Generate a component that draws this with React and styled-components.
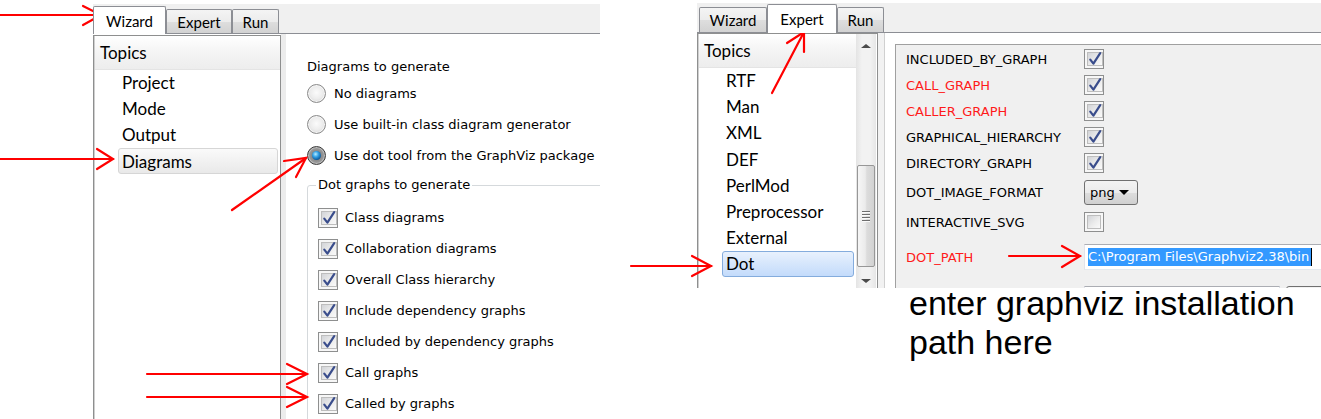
import React from 'react';
import styled, { createGlobalStyle, css } from 'styled-components';

const Global = createGlobalStyle`
  html, body { margin: 0; padding: 0; background: #fff; }
  body { width: 1321px; height: 419px; overflow: hidden; }
`;

const Page = styled.div`
  position: relative;
  display: flex;
  align-items: flex-start;
  width: 1321px;
  height: 419px;
  overflow: hidden;
  background: #fff;
`;

const Window = styled.div`
  display: flex;
  flex-direction: column;
  flex: none;
  overflow: hidden;
  width: ${p => p.$w}px;
  height: ${p => p.$h}px;
  margin: ${p => p.$top}px 0 0 ${p => p.$left}px;
`;

const Column = styled.div`
  display: flex;
  flex-direction: column;
  flex: none;
  width: 624px;
  margin: 3px 0 0 97px;
`;

const TabBar = styled.div`
  display: flex;
  align-items: flex-end;
  flex: none;
  height: 29px;
  padding-left: ${p => p.$pad}px;
  background: #f0f0f0;
  border-bottom: 1px solid #8c8e94;
`;

const Tab = styled.div`
  box-sizing: border-box;
  flex: none;
  width: ${p => p.$w}px;
  height: ${p => p.$h}px;
  display: flex;
  align-items: center;
  justify-content: center;
  font: 15px "Lato", "Noto Sans", sans-serif;
  color: #000;
  border: 1px solid #8c8e94;
  border-bottom: none;
  border-radius: 2px 2px 0 0;
  ${p => p.$active
    ? css`
        background: #fff;
        margin-bottom: -1px;
        position: relative;
        z-index: 1;
      `
    : css`
        background: linear-gradient(#f4f4f4 0%, #ececec 50%, #dedede 51%, #d2d2d2 100%);
      `}
`;

const Body = styled.div`
  display: flex;
  flex: none;
  height: ${p => p.$h}px;
  background: #fff;
`;

const TopicList = styled.div`
  box-sizing: border-box;
  flex: none;
  width: ${p => p.$w}px;
  margin-top: ${p => p.$mt}px;
  display: flex;
  border: 1px solid #8e8f8f;
  box-shadow: inset 1px 0 0 #cfcfcf;
  background: #fff;
  overflow: hidden;
`;

const ListItems = styled.div`
  flex: 1;
  display: flex;
  flex-direction: column;
  padding-left: 1px;
`;

const ListHeader = styled.div`
  flex: none;
  box-sizing: border-box;
  height: 33.5px;
  padding-left: 5px;
  display: flex;
  align-items: center;
  font: 17px "Lato", "Noto Sans", sans-serif;
  color: #000;
  background: linear-gradient(#ffffff 0%, #f5f5f5 45%, #ededed 100%);
  border-bottom: 1px solid #e4e4e4;
`;

const ListItem = styled.div`
  flex: none;
  box-sizing: border-box;
  height: 26.2px;
  margin: 0 2px 0 23px;
  padding-left: 3px;
  display: flex;
  align-items: center;
  font: 17px "Lato", "Noto Sans", sans-serif;
  color: #000;
  border: 1px solid transparent;
  border-radius: 3px;
  ${p => p.$sel === 'gray' && css`
    background: linear-gradient(#fafafa, #e9e9e9);
    border-color: #d6d6d6;
  `}
  ${p => p.$sel === 'blue' && css`
    background: linear-gradient(#e8f1fd, #c3dbfb);
    border-color: #84acdd;
  `}
`;

const ScrollBar = styled.div`
  flex: none;
  width: 20px;
  margin-right: 1px;
  display: flex;
  flex-direction: column;
  align-items: center;
  background: linear-gradient(90deg, #e4e4e4, #f2f2f2 30%, #f2f2f2 70%, #e6e6e6);
`;

const ArrowBtn = styled.div`
  flex: none;
  height: ${p => p.$h}px;
  display: flex;
  align-items: center;
  justify-content: center;
  &::after {
    content: '';
    width: 0;
    height: 0;
    border-left: 5px solid transparent;
    border-right: 5px solid transparent;
    ${p => p.$down
      ? css`border-top: 4px solid #4b4b4b;`
      : css`border-bottom: 4px solid #4b4b4b;`}
  }
`;

const TrackGap = styled.div`
  flex: none;
  height: ${p => p.$h}px;
`;

const Thumb = styled.div`
  flex: none;
  box-sizing: border-box;
  width: 18px;
  height: 102px;
  border: 1px solid #979797;
  border-radius: 2px;
  background: linear-gradient(90deg, #f6f6f6 0%, #ebebeb 45%, #dcdcdc 55%, #d2d2d2 100%);
  display: flex;
  flex-direction: column;
  align-items: center;
  justify-content: center;
  gap: 2px;
`;

const Grip = styled.span`
  width: 8px;
  height: 1px;
  background: #6e6e6e;
  box-shadow: 0 1px 0 #fafafa;
`;

const Strip = styled.div`
  flex: none;
  width: ${p => p.$w}px;
  background: #ececec;
`;

const Content = styled.div`
  flex: 1;
  min-width: 0;
  overflow: hidden;
  padding: 20px 0 0 21px;
  font: 13px "DejaVu Sans", Verdana, sans-serif;
  color: #000;
`;

const Heading = styled.div`
  height: 24px;
  display: flex;
  align-items: center;
`;

const OptionRow = styled.div`
  height: 31px;
  display: flex;
  align-items: center;
  gap: ${p => p.$gap}px;
  white-space: nowrap;
`;

const Radio = styled.span`
  flex: none;
  box-sizing: border-box;
  width: 19px;
  height: 19px;
  border-radius: 50%;
  border: 1px solid ${p => (p.$on ? '#3a3a3a' : '#8a8a8a')};
  background: ${p => (p.$on
    ? 'radial-gradient(circle, #6d6d6d 0%, #9a9a9a 60%, #cfcfcf 100%)'
    : 'radial-gradient(circle at 50% 45%, #fbfbfb 0%, #ececec 50%, #c8c8c8 100%)')};
  box-shadow: inset 0 0 0 1px ${p => (p.$on ? '#bdbdbd' : '#f6f6f6')};
  display: flex;
  align-items: center;
  justify-content: center;
`;

const RadioDot = styled.span`
  width: 9px;
  height: 9px;
  border-radius: 50%;
  background: radial-gradient(circle at 40% 35%, #b8ecff 0%, #35a2e6 35%, #0e5fa3 70%, #08305a 100%);
`;

const GroupBox = styled.fieldset`
  margin: 6px 0 0 0;
  padding: 0 0 0 8px;
  width: 340px;
  height: 280px;
  min-width: 0;
  box-sizing: border-box;
  border: 1px solid #d5d9dc;
  border-radius: 3px;
`;

const GroupTitle = styled.legend`
  padding: 0 2px;
  font: 13px/16px "DejaVu Sans", Verdana, sans-serif;
  color: #000;
`;

const CheckList = styled.div`
  padding: 9px 0 0 2px;
`;

const CheckBox = styled.span`
  flex: none;
  box-sizing: border-box;
  width: 20px;
  height: 20px;
  padding: 2px;
  display: flex;
  border: 1px solid #8e8f8f;
  background: #f7f7f7;
`;

const CheckInner = styled.span`
  flex: 1;
  display: flex;
  align-items: center;
  justify-content: center;
  border: 1px solid #bdbdbd;
  background: linear-gradient(135deg, #d2d4d8 0%, #ececec 55%, #fafafa 100%);
`;

const Splitter = styled.div`
  flex: none;
  width: 6px;
  background: #f2f2f2;
`;

const ScrollArea = styled.div`
  flex: 1;
  min-width: 0;
  overflow: hidden;
  background: #fff;
  border-left: 1px solid #d0d0d0;
  padding: 11px 0 0 10px;
  display: flex;
`;

const Panel = styled.div`
  flex: 1;
  box-sizing: border-box;
  background: #f0f0f0;
  border: 1px solid #a0a0a0;
  border-right: none;
  border-bottom: none;
  padding: 1px 0 0 10px;
  font: 13px "DejaVu Sans", Verdana, sans-serif;
`;

const SettingRow = styled.div`
  display: grid;
  grid-template-columns: 178px auto;
  align-items: center;
  height: ${p => p.$h}px;
  white-space: nowrap;
  color: ${p => (p.$red ? '#ff1a1a' : '#000')};
`;

const Combo = styled.div`
  box-sizing: border-box;
  width: 54px;
  height: 25px;
  padding: 0 0 0 5px;
  display: flex;
  align-items: center;
  justify-content: space-between;
  border: 1px solid #707070;
  border-radius: 3px;
  background: linear-gradient(#f3f3f3 0%, #ebebeb 50%, #dddddd 51%, #d0d0d0 100%);
  color: #000;
  &::after {
    content: '';
    margin-right: 8px;
    border-left: 5px solid transparent;
    border-right: 5px solid transparent;
    border-top: 5px solid #000;
  }
`;

const PathInput = styled.div`
  box-sizing: border-box;
  width: ${p => p.$w}px;
  height: 26px;
  padding-left: 3px;
  display: flex;
  align-items: center;
  background: #fff;
  border: 1px solid #abadb3;
  border-color: #abadb3 #dbdfe6 #e3e9ef #e2e3ea;
`;

const Selected = styled.span`
  background: #3399ff;
  color: #fff;
  line-height: 18px;
  padding-right: 2px;
  border-right: 1px solid #000;
`;

const Controls = styled.div`
  display: flex;
  gap: 6px;
`;

const SmallButton = styled.div`
  box-sizing: border-box;
  width: 40px;
  height: 26px;
  border: 1px solid #707070;
  border-radius: 3px;
  background: linear-gradient(#f3f3f3, #dddddd);
`;

const Note = styled.div`
  margin: -4px 0 0 212px;
  font: 34px/39px "Liberation Sans", Arial, sans-serif;
  color: #000;
  white-space: nowrap;
  position: relative;
`;

const Overlay = styled.svg`
  position: absolute;
  left: 0;
  top: 0;
  width: 1321px;
  height: 419px;
  pointer-events: none;
`;

const Tick = () => (
  <svg width="14" height="14" viewBox="0 0 14 14">
    <path d="M2.3 7.6 L5.4 11.6 L12.2 1.2" fill="none" stroke="#3a4d8c" strokeWidth="2.2" strokeLinecap="round" strokeLinejoin="round" />
  </svg>
);

const Check = ({ on = true }) => (
  <CheckBox>
    <CheckInner>{on && <Tick />}</CheckInner>
  </CheckBox>
);

const arrows = [
  { from: [0, 15], tip: [101, 15], a: [83, 6], b: [83, 25] },
  { from: [0, 159], tip: [113, 159], a: [97, 149], b: [97, 169] },
  { from: [232, 210], tip: [306, 158], a: [284, 161], b: [296, 177] },
  { from: [147, 374], tip: [307, 374], a: [287, 364], b: [287, 384] },
  { from: [147, 397], tip: [307, 397], a: [287, 387], b: [287, 407] },
  { from: [772, 93], tip: [804, 32], a: [787, 43], b: [804, 52] },
  { from: [631, 266], tip: [711, 266], a: [692, 256], b: [692, 276] },
  { from: [1009, 256], tip: [1080, 256], a: [1062, 246], b: [1062, 267] },
];

const leftTopics = ['Project', 'Mode', 'Output', 'Diagrams'];
const rightTopics = ['RTF', 'Man', 'XML', 'DEF', 'PerlMod', 'Preprocessor', 'External', 'Dot'];
const dotGraphs = [
  'Class diagrams',
  'Collaboration diagrams',
  'Overall Class hierarchy',
  'Include dependency graphs',
  'Included by dependency graphs',
  'Call graphs',
  'Called by graphs',
];
const radios = [
  ['No diagrams', false],
  ['Use built-in class diagram generator', false],
  ['Use dot tool from the GraphViz package', true],
];
const checkSettings = [
  ['INCLUDED_BY_GRAPH', false],
  ['CALL_GRAPH', true],
  ['CALLER_GRAPH', true],
  ['GRAPHICAL_HIERARCHY', false],
  ['DIRECTORY_GRAPH', false],
];

export default function App() {
  return (
    <Page>
      <Global />
      <Window $w={507} $h={415} $top={4} $left={93}>
        <TabBar $pad={0}>
          <Tab $active $w={73} $h={28}>Wizard</Tab>
          <Tab $w={66} $h={24}>Expert</Tab>
          <Tab $w={47} $h={24}>Run</Tab>
        </TabBar>
        <Body $h={400}>
          <TopicList $w={188} $mt={1}>
            <ListItems>
              <ListHeader>Topics</ListHeader>
              {leftTopics.map(t => (
                <ListItem key={t} $sel={t === 'Diagrams' ? 'gray' : undefined}>{t}</ListItem>
              ))}
            </ListItems>
          </TopicList>
          <Strip $w={5} />
          <Content>
            <Heading>Diagrams to generate</Heading>
            {radios.map(([label, on]) => (
              <OptionRow key={label} $gap={8}>
                <Radio $on={on}>{on && <RadioDot />}</Radio>
                {label}
              </OptionRow>
            ))}
            <GroupBox>
              <GroupTitle>Dot graphs to generate</GroupTitle>
              <CheckList>
                {dotGraphs.map(label => (
                  <OptionRow key={label} $gap={7}>
                    <Check />
                    {label}
                  </OptionRow>
                ))}
              </CheckList>
            </GroupBox>
          </Content>
        </Body>
      </Window>

      <Column>
        <Window $w={624} $h={285} $top={0} $left={0}>
          <TabBar $pad={2}>
            <Tab $w={68} $h={25}>Wizard</Tab>
            <Tab $active $w={70} $h={29}>Expert</Tab>
            <Tab $w={47} $h={25}>Run</Tab>
          </TabBar>
          <Body $h={290}>
            <TopicList $w={181} $mt={0}>
              <ListItems>
                <ListHeader>Topics</ListHeader>
                {rightTopics.map(t => (
                  <ListItem key={t} $sel={t === 'Dot' ? 'blue' : undefined}>{t}</ListItem>
                ))}
              </ListItems>
              <ScrollBar>
                <ArrowBtn $h={24} />
                <TrackGap $h={107} />
                <Thumb>
                  <Grip />
                  <Grip />
                  <Grip />
                  <Grip />
                </Thumb>
                <TrackGap $h={4} />
                <ArrowBtn $h={20} $down />
              </ScrollBar>
            </TopicList>
            <Splitter />
            <ScrollArea>
              <Panel>
                {checkSettings.map(([name, red]) => (
                  <SettingRow key={name} $h={26} $red={red}>
                    <span>{name}</span>
                    <Check />
                  </SettingRow>
                ))}
                <SettingRow $h={32}>
                  <span>DOT_IMAGE_FORMAT</span>
                  <Combo>png</Combo>
                </SettingRow>
                <SettingRow $h={28}>
                  <span>INTERACTIVE_SVG</span>
                  <Check on={false} />
                </SettingRow>
                <SettingRow $h={42} $red>
                  <span>DOT_PATH</span>
                  <PathInput $w={260}>
                    <Selected>C:\Program Files\Graphviz2.38\bin</Selected>
                  </PathInput>
                </SettingRow>
                <SettingRow $h={42}>
                  <span />
                  <Controls>
                    <PathInput $w={196} />
                    <SmallButton />
                  </Controls>
                </SettingRow>
              </Panel>
            </ScrollArea>
          </Body>
        </Window>
        <Note>
          enter graphviz installation
          <br />
          path here
        </Note>
      </Column>

      <Overlay viewBox="0 0 1321 419">
        {arrows.map((ar, i) => (
          <g key={i} stroke="#ff0000" strokeWidth="2.2" fill="none" strokeLinecap="round" strokeLinejoin="miter">
            <line x1={ar.from[0]} y1={ar.from[1]} x2={ar.tip[0]} y2={ar.tip[1]} />
            <polyline points={`${ar.a[0]},${ar.a[1]} ${ar.tip[0]},${ar.tip[1]} ${ar.b[0]},${ar.b[1]}`} />
          </g>
        ))}
      </Overlay>
    </Page>
  );
}
